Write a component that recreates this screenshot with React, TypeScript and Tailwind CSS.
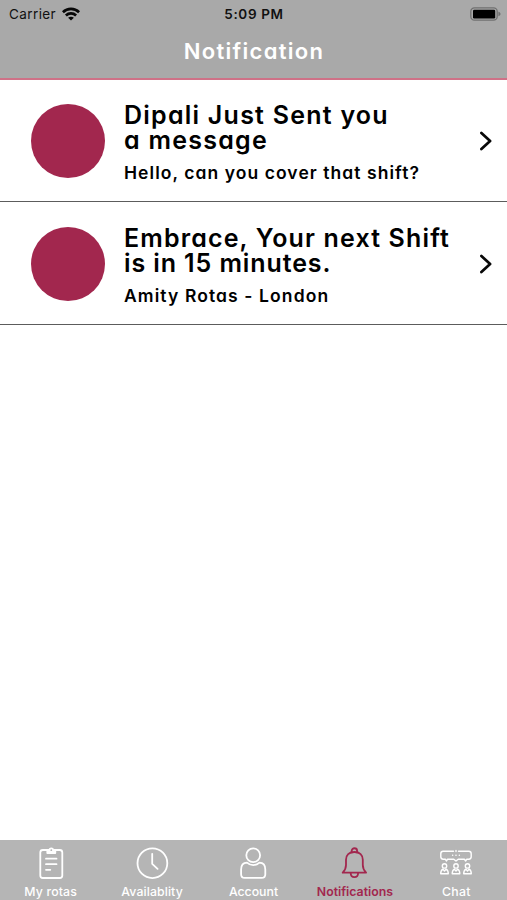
import React from "react";

const rounded = "font-['Inter',sans-serif] [font-feature-settings:'cv11']";

type Line = { text: string; tracking: string };
type Item = { title: Line[]; detail: Line; height: string };

const items: Item[] = [
  {
    title: [
      { text: "Dipali Just Sent you", tracking: "tracking-[1.24px]" },
      { text: "a message", tracking: "tracking-[1.25px]" },
    ],
    detail: { text: "Hello, can you cover that shift?", tracking: "tracking-[1.06px]" },
    height: "h-[122px]",
  },
  {
    title: [
      { text: "Embrace, Your next Shift", tracking: "tracking-[1.15px]" },
      { text: "is in 15 minutes.", tracking: "tracking-[0.9px]" },
    ],
    detail: { text: "Amity Rotas - London", tracking: "tracking-[1.1px]" },
    height: "h-[123px] pt-px",
  },
];

function Wifi() {
  return (
    <svg width="18" height="14" viewBox="0 0 18 14" fill="none" stroke="#080808" strokeWidth="2.7">
      <path d="M0.9 5.2C5.4 0.7 12.6 0.7 17.1 5.2" />
      <path d="M3.9 8.5C6.8 5.7 11.2 5.7 14.1 8.5" />
      <path d="M9 13.6L6.1 10.8C7.8 9.3 10.2 9.3 11.9 10.8Z" fill="#080808" stroke="none" />
    </svg>
  );
}

function Battery() {
  return (
    <svg width="31" height="14" viewBox="0 0 31 14">
      <rect x="0.8" y="0.8" width="26.4" height="12.4" rx="3.6" fill="none" stroke="#707070" strokeWidth="1.3" />
      <rect x="3" y="2.8" width="22.2" height="8.6" rx="1.2" fill="#000" />
      <path d="M28.4 4.8C31.2 5.5 31.2 8.5 28.4 9.2Z" fill="#707070" />
    </svg>
  );
}

function Row({ item }: { item: Item }) {
  return (
    <li className={`flex items-center border-b border-[#5c5c5c] pl-[31px] pr-[14px] ${item.height}`}>
      <div className="size-[74px] shrink-0 rounded-full bg-[#a2274e]" />
      <div className={`ml-[19px] grow whitespace-nowrap pt-[5px] text-black ${rounded}`}>
        <h2 className="text-[25px] font-[560] leading-[25px]">
          {item.title.map((l) => (
            <div key={l.text} className={l.tracking}>
              {l.text}
            </div>
          ))}
        </h2>
        <p className={`mt-[8px] text-[17.5px] font-[560] leading-[23px] ${item.detail.tracking}`}>
          {item.detail.text}
        </p>
      </div>
      <svg width="14" height="20" viewBox="0 0 14 20" fill="none" stroke="#080808" strokeWidth="2.7" strokeLinecap="round" strokeLinejoin="round">
        <path d="M2.4 1.9L11.1 10L2.4 18.1" />
      </svg>
    </li>
  );
}

const icons: Record<string, React.ReactNode> = {
  rotas: (
    <>
      <rect x="7.3" y="5" width="22" height="28" rx="2.5" />
      <path d="M14.3 8V5.3H16.3C16.6 2.7 20 2.7 20.3 5.3H22.3V8Z" fill="currentColor" />
      <circle cx="18.3" cy="5.2" r="0.9" fill="#b5b5b5" stroke="none" />
      <path d="M13 13.7H23.5M13 19.2H23.5M13 24.8H17.3" />
    </>
  ),
  clock: (
    <>
      <circle cx="18.4" cy="18.2" r="14.9" />
      <path d="M18.2 8.8V18.8L23.6 23.9" />
    </>
  ),
  account: (
    <>
      <circle cx="18.2" cy="10.2" r="6.9" />
      <path d="M12 17.6C7.9 17.7 6.1 20.6 6.1 24.5V29.2C6.1 31.8 7.3 32.9 9.7 32.9H26.7C29.1 32.9 30.3 31.8 30.3 29.2V24.5C30.3 20.6 28.5 17.7 24.4 17.6C20.8 20.9 15.6 20.9 12 17.6Z" />
    </>
  ),
  bell: (
    <g transform="translate(-0.6 0)">
      <path d="M15.3 7.4V5.8C15.3 2.4 20.7 2.4 20.7 5.8V7.4" />
      <path d="M6.3 27.7C8.8 25.2 9.6 23.6 9.6 20V14.8C9.6 10.2 12.6 7 18 7S26.4 10.2 26.4 14.8V20C26.4 23.6 27.2 25.2 29.7 27.7Z" />
      <path d="M14.3 28C14.3 33.6 21.7 33.6 21.7 28" />
    </g>
  ),
  chat: (
    <g strokeWidth="1.4">
      <path d="M7.3 14.2H5.2C3.7 14.2 2.8 13.3 2.8 11.8V8.7C2.8 7.2 3.7 6.3 5.2 6.3H15.5M20.5 6.3H30.8C32.3 6.3 33.2 7.2 33.2 8.7V11.8C33.2 13.3 32.3 14.2 30.8 14.2H28.8L27.6 16L26.4 14.2H20.2L18 16L15.8 14.2H9.6L8.4 16L7.3 14.2" />
      <path d="M14.6 10.2H14.7M17.9 10.2H18.1M21.3 10.2H21.4M18 5.4V6.5" />
      {[6.5, 18, 29.5].map((x) => (
        <g key={x} transform={`translate(${x} 0)`}>
          <circle cx="0" cy="20.9" r="2.2" />
          <path d="M-1.6 24.1C-3 24.8-3.8 26-3.8 28.7H3.8C3.8 26 3 24.8 1.6 24.1L0 26Z" />
        </g>
      ))}
    </g>
  ),
};

const tabs = [
  { icon: "rotas", label: "My rotas", style: "text-white font-medium", tracking: "tracking-[0.15px]" },
  { icon: "clock", label: "Availablity", style: "text-white font-medium", tracking: "tracking-[0.1px]" },
  { icon: "account", label: "Account", style: "text-white font-medium", tracking: "tracking-[0px]" },
  { icon: "bell", label: "Notifications", style: "text-[#a2274e] font-semibold", tracking: "tracking-[0px]" },
  { icon: "chat", label: "Chat", style: "text-white font-medium", tracking: "tracking-[0.3px]" },
];

export default function App() {
  return (
    <div className="flex h-[900px] w-[507px] flex-col overflow-hidden bg-white font-['Inter',sans-serif]">
      <header className="h-[80px] shrink-0 border-b-2 border-[#cf7187] bg-[#a9a9a9]">
        <div className="grid h-[27px] grid-cols-3 items-center px-[9px] text-[13.5px] text-[#111]">
          <div className="flex items-center gap-[6px]">
            <span className="pt-px tracking-[0.4px]">Carrier</span>
            <Wifi />
          </div>
          <span className="pl-px pt-px text-center font-semibold tracking-[0.65px]">5:09 PM</span>
          <div className="flex justify-end -mr-[3px]">
            <Battery />
          </div>
        </div>
        <h1 className={`flex h-[49px] items-center justify-center text-[22px] font-semibold text-white ${rounded}`}>
          <span className="ml-px tracking-[1.3px]">Notification</span>
        </h1>
      </header>
      <ul className="grow">
        {items.map((item) => (
          <Row key={item.detail.text} item={item} />
        ))}
      </ul>
      <nav className="grid h-[60px] shrink-0 grid-cols-5 bg-[#b5b5b5]">
        {tabs.map((t) => (
          <div key={t.label} className={`flex flex-col items-center pt-[5px] ${t.style}`}>
            <svg width="36" height="36" viewBox="0 0 36 36" fill="none" stroke="currentColor" strokeWidth="1.8" strokeLinecap="round" strokeLinejoin="round">
              {icons[t.icon]}
            </svg>
            <span className={`mt-px text-[12.3px] leading-[19px] ${t.tracking}`}>{t.label}</span>
          </div>
        ))}
      </nav>
    </div>
  );
}
